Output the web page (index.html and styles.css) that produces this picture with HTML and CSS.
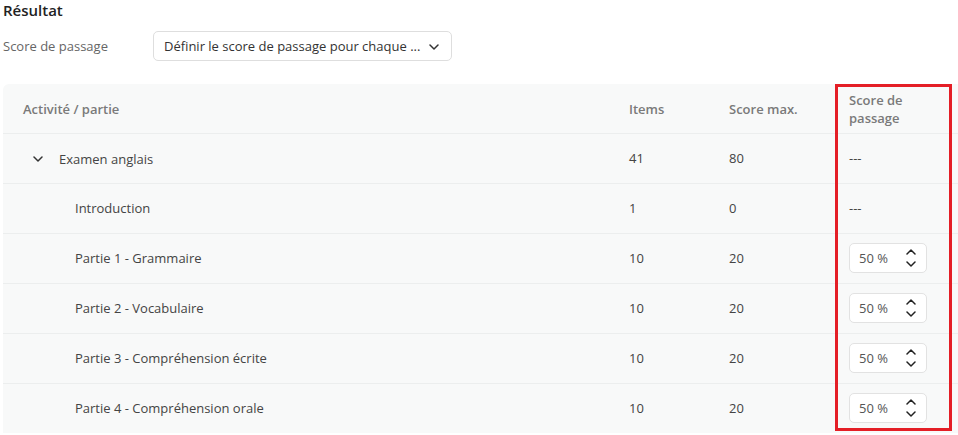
FILE: index.html
```html
<!DOCTYPE html>
<html lang="fr">
<head>
<meta charset="utf-8">
<link rel="stylesheet" href="styles.css">
</head>
<body>
<div class="page">
  <h2 class="title">Résultat</h2>
  <div class="field">
    <span class="field-label">Score de passage</span>
    <div class="select">
      <span>Définir le score de passage pour chaque ...</span>
      <svg class="chev" width="10" height="6" viewBox="0 0 10 6"><path d="M1 1l4 4 4-4" fill="none" stroke="#333" stroke-width="1.5" stroke-linecap="round" stroke-linejoin="round"/></svg>
    </div>
  </div>
  <div class="table-wrap">
    <table class="tbl">
      <colgroup><col class="c1"><col class="c2"><col class="c3"><col class="c4"></colgroup>
      <thead>
        <tr><th>Activité / partie</th><th>Items</th><th>Score max.</th><th>Score de<br>passage</th></tr>
      </thead>
      <tbody>
        <tr><td><span class="parent"><svg class="toggle" width="10" height="6" viewBox="0 0 10 6"><path d="M1 1l4 4 4-4" fill="none" stroke="#333" stroke-width="1.5" stroke-linecap="round" stroke-linejoin="round"/></svg>Examen anglais</span></td><td>41</td><td>80</td><td>---</td></tr>
        <tr><td class="child">Introduction</td><td>1</td><td>0</td><td>---</td></tr>
        <tr><td class="child">Partie 1 - Grammaire</td><td>10</td><td>20</td><td><div class="spin"><span>50 %</span><span class="arrows"><svg width="10" height="6" viewBox="0 0 10 6"><path d="M1 5l4-4 4 4" fill="none" stroke="#222" stroke-width="1.5" stroke-linecap="round" stroke-linejoin="round"/></svg><svg width="10" height="6" viewBox="0 0 10 6"><path d="M1 1l4 4 4-4" fill="none" stroke="#222" stroke-width="1.5" stroke-linecap="round" stroke-linejoin="round"/></svg></span></div></td></tr>
        <tr><td class="child">Partie 2 - Vocabulaire</td><td>10</td><td>20</td><td><div class="spin"><span>50 %</span><span class="arrows"><svg width="10" height="6" viewBox="0 0 10 6"><path d="M1 5l4-4 4 4" fill="none" stroke="#222" stroke-width="1.5" stroke-linecap="round" stroke-linejoin="round"/></svg><svg width="10" height="6" viewBox="0 0 10 6"><path d="M1 1l4 4 4-4" fill="none" stroke="#222" stroke-width="1.5" stroke-linecap="round" stroke-linejoin="round"/></svg></span></div></td></tr>
        <tr><td class="child">Partie 3 - Compréhension écrite</td><td>10</td><td>20</td><td><div class="spin"><span>50 %</span><span class="arrows"><svg width="10" height="6" viewBox="0 0 10 6"><path d="M1 5l4-4 4 4" fill="none" stroke="#222" stroke-width="1.5" stroke-linecap="round" stroke-linejoin="round"/></svg><svg width="10" height="6" viewBox="0 0 10 6"><path d="M1 1l4 4 4-4" fill="none" stroke="#222" stroke-width="1.5" stroke-linecap="round" stroke-linejoin="round"/></svg></span></div></td></tr>
        <tr><td class="child">Partie 4 - Compréhension orale</td><td>10</td><td>20</td><td><div class="spin"><span>50 %</span><span class="arrows"><svg width="10" height="6" viewBox="0 0 10 6"><path d="M1 5l4-4 4 4" fill="none" stroke="#222" stroke-width="1.5" stroke-linecap="round" stroke-linejoin="round"/></svg><svg width="10" height="6" viewBox="0 0 10 6"><path d="M1 1l4 4 4-4" fill="none" stroke="#222" stroke-width="1.5" stroke-linecap="round" stroke-linejoin="round"/></svg></span></div></td></tr>
      </tbody>
    </table>
    <div class="highlight"></div>
  </div>
</div>
</body>
</html>
```
FILE: styles.css
```css
html, body {
  margin: 0;
  padding: 0;
  background: #fff;
  overflow: hidden;
}
body {
  font-family: "Open Sans", "Noto Sans", sans-serif;
  font-size: 13px;
  color: #444;
}
.page {
  padding: 0 0 0 3px;
}
.title {
  margin: 0;
  font-size: 15px;
  font-weight: 600;
  color: #222;
  line-height: 21px;
}
.field {
  display: flex;
  align-items: center;
  margin-top: 10px;
}
.field-label {
  width: 150px;
  color: #666;
}
.select {
  width: 275px;
  height: 28px;
  border: 1px solid #dedede;
  border-radius: 5px;
  display: flex;
  align-items: center;
  justify-content: space-between;
  padding: 0 12px 0 10px;
  color: #333;
}
.select .chev { margin-top: 1px; }
.table-wrap {
  position: relative;
  margin-top: 23px;
  background: #f8f9f9;
  border-top-left-radius: 6px;
}
.tbl {
  width: 955px;
  border-collapse: collapse;
  table-layout: fixed;
}
.c1 { width: 606px; }
.c2 { width: 100px; }
.c3 { width: 120px; }
.tbl th {
  text-align: left;
  font-weight: 600;
  color: #7a7a7a;
  height: 49px;
  padding: 0 0 0 20px;
  line-height: 18px;
  vertical-align: middle;
}
.tbl td {
  height: 48px;
  border-top: 1px solid #eceeee;
  padding: 0 0 1px 20px;
  vertical-align: middle;
  color: #444;
}
.tbl td.child { padding-left: 72px; }
.parent {
  display: inline-flex;
  align-items: center;
  padding-left: 10px;
}
.toggle { margin-right: 16px; }
.spin {
  background: #fff;
  border: 1px solid #e2e2e2;
  border-radius: 5px;
  display: flex;
  align-items: center;
  justify-content: space-between;
  padding: 0 10px 0 9px;
  box-sizing: border-box;
  width: 78px;
  height: 30px;
  color: #555;
}
.arrows {
  display: flex;
  flex-direction: column;
  gap: 6px;
}
.arrows svg { display: block; }
.highlight {
  position: absolute;
  left: 832px;
  top: 0;
  width: 111px;
  height: 341px;
  border: 3px solid #e41e26;
  pointer-events: none;
}
```
